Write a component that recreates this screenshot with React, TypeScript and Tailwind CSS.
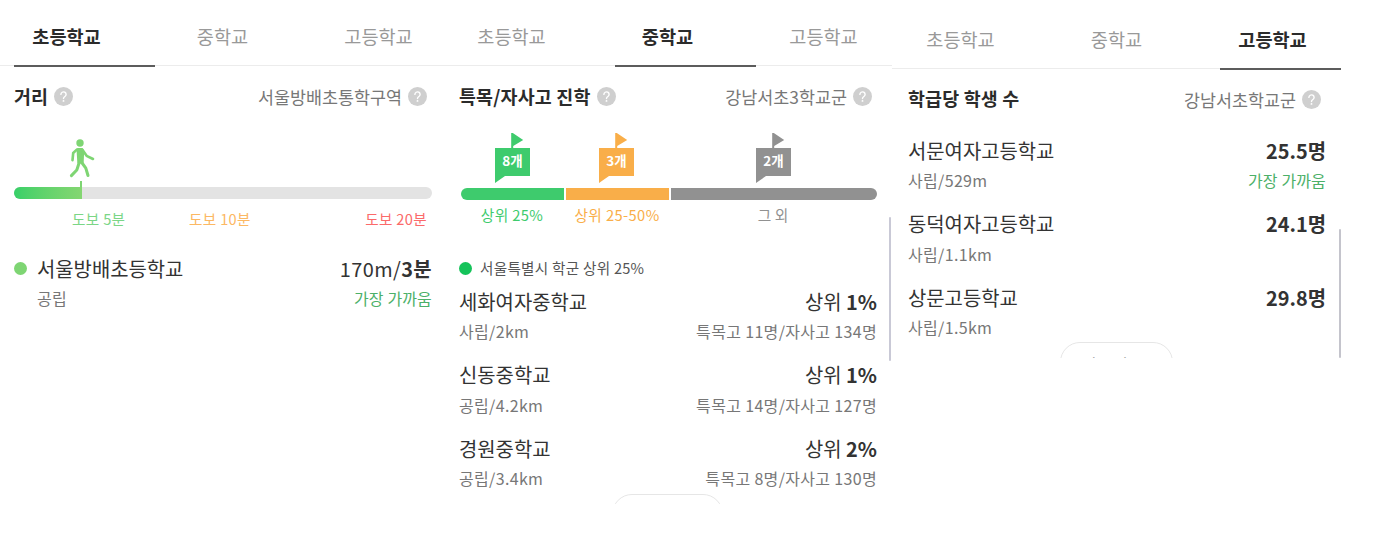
import type { ReactNode } from "react";
import clsx from "clsx";

type School = {
  name: string;
  info: string;
  value: ReactNode;
  note?: string;
  near?: boolean;
};

const TABS = ["초등학교", "중학교", "고등학교"];

const MIDDLE_SCHOOLS: School[] = [
  { name: "세화여자중학교", info: "사립/2km", value: <>상위 <b>1%</b></>, note: "특목고 11명/자사고 134명" },
  { name: "신동중학교", info: "공립/4.2km", value: <>상위 <b>1%</b></>, note: "특목고 14명/자사고 127명" },
  { name: "경원중학교", info: "공립/3.4km", value: <>상위 <b>2%</b></>, note: "특목고 8명/자사고 130명" },
];

const HIGH_SCHOOLS: School[] = [
  { name: "서문여자고등학교", info: "사립/529m", value: <b>25.5명</b>, note: "가장 가까움", near: true },
  { name: "동덕여자고등학교", info: "사립/1.1km", value: <b>24.1명</b> },
  { name: "상문고등학교", info: "사립/1.5km", value: <b>29.8명</b> },
];

function Tabs({ active, className }: { active: number; className?: string }) {
  return (
    <div className={clsx("flex border-b border-[#ececec]", className)}>
      {TABS.map((tab, i) => (
        <div key={tab} className="relative flex w-[156px] shrink-0 items-center justify-center pr-[51px]">
          <span
            className={clsx(
              "whitespace-nowrap text-[18.6px]",
              i === active ? "font-bold text-[#2b2b2b]" : "text-[#999]"
            )}
          >
            {tab}
          </span>
          {i === active && (
            <span className="absolute -bottom-[2px] left-0 h-[2px] w-[141px] bg-[#5c5c5c]" />
          )}
        </div>
      ))}
    </div>
  );
}

function Help() {
  return (
    <svg viewBox="0 0 19 19" className="h-[19px] w-[19px] shrink-0">
      <circle cx="9.5" cy="9.5" r="9.5" fill="#cfcfcf" />
      <path
        d="M6.9 7.4a2.6 2.5 0 1 1 4 2.1c-.9.6-1.4 1-1.4 2"
        fill="none"
        stroke="#fff"
        strokeWidth="1.4"
        strokeLinecap="round"
      />
      <circle cx="9.5" cy="13.9" r="0.95" fill="#fff" />
    </svg>
  );
}

function Title({ children, help, district, className }: { children: ReactNode; help?: boolean; district: string; className?: string }) {
  return (
    <div className="flex h-[60px] items-center justify-between whitespace-nowrap pt-[2px]">
      <div className="flex items-center gap-[6px]">
        <h2 className={clsx("text-[18.4px] font-bold tracking-[0.2px] text-[#2b2b2b]", className)}>{children}</h2>
        {help && <Help />}
      </div>
      <div className="flex items-center gap-[6px] pr-[5px]">
        <span className="text-[17.4px] text-[#777]">{district}</span>
        <Help />
      </div>
    </div>
  );
}

function SchoolRow({ school }: { school: School }) {
  return (
    <div className="h-[73.7px] whitespace-nowrap">
      <div className="flex h-[31px] items-center justify-between text-[19.9px] text-[#333]">
        <span>{school.name}</span>
        <span>{school.value}</span>
      </div>
      <div className="flex h-[28px] items-center justify-between text-[16px] tracking-[0.33px] text-[#777]">
        <span>{school.info}</span>
        <span className={clsx(school.near && "tracking-[0.15px] text-[#4cb068]")}>{school.note}</span>
      </div>
    </div>
  );
}

function Walker() {
  return (
    <svg viewBox="0 0 26 39" className="h-[39px] w-[26px]" fill="none" stroke="#7ed573" strokeLinecap="round" strokeLinejoin="round">
      <circle cx="11" cy="4" r="3.7" fill="#7ed573" stroke="none" />
      <path d="M8.8 10.2h4.2l.8 3.5-.4 9.6H9.6z" fill="#7ed573" strokeWidth="2.6" />
      <path d="M7.8 10.6L4.2 14l-.7 7.2" strokeWidth="2.6" />
      <path d="M13.4 10.8l4.2 6 6.4 3.2" strokeWidth="2.6" />
      <path d="M10.4 23l-2.6 8-5.4 5.6" strokeWidth="3" />
      <path d="M12 22.5l4.8 6.6 2.2 7.4" strokeWidth="3" />
    </svg>
  );
}

function Flag({ label, className }: { label: string; className?: string }) {
  return (
    <div className={clsx("relative h-[50px] w-[35px]", className)}>
      <svg viewBox="0 0 35 50" className="h-[50px] w-[35px]" fill="currentColor">
        <path d="M16.2 0h1.6L28.2 7 18.2 13v3h-2z" />
        <path d="M0 15h35v28H10L0 50z" />
      </svg>
      <span className="absolute inset-x-0 top-[14px] text-center text-[13.5px] font-bold leading-[26px] text-white">
        {label}
      </span>
    </div>
  );
}

function MoreButton({ className }: { className?: string }) {
  return (
    <div className={clsx("overflow-hidden", className)}>
      <div className="flex h-[40px] justify-center rounded-full border border-[#e6e6e6] pr-6 pt-[12px] text-[17px] leading-[20px] text-[#555]">
        더보기
      </div>
    </div>
  );
}

export default function App() {
  return (
    <div className="flex h-[538px] w-full overflow-hidden bg-white font-['Noto_Sans_CJK_KR',sans-serif]">
      {/* 초등학교 */}
      <section className="w-[446px] overflow-hidden">
        <Tabs active={0} className="h-[66px] pl-[14px] pt-[6px]" />
        <div className="ml-[14px] w-[418px]">
          <Title help district="서울방배초통학구역">거리</Title>
          <div className="ml-[55px] mt-[13px]">
            <Walker />
          </div>
          <div className="ml-[66px] mt-[3px] h-[6px] w-[2px] bg-[#7ed573]" />
          <div className="h-[12px] overflow-hidden rounded-full bg-[#e3e3e3]">
            <div className="h-full w-[68px] bg-linear-to-r from-[#36d068] to-[#84d671]" />
          </div>
          <div className="flex h-[39px] items-center whitespace-nowrap text-[14.6px] tracking-[0.35px]">
            <span className="ml-[58px] w-[117px] text-[#7bd686]">도보 5분</span>
            <span className="text-[#fcb863]">도보 10분</span>
            <span className="ml-auto pr-[5px] text-[#fb6a6a]">도보 20분</span>
          </div>

          <div className="mt-[15px] flex">
            <span className="mr-[10px] mt-[9px] h-[13px] w-[13px] rounded-full bg-[#7ed573]" />
            <div className="flex-1">
              <SchoolRow
                school={{
                  name: "서울방배초등학교",
                  info: "공립",
                  value: <span className="tracking-[0.4px]">170m/<b>3분</b></span>,
                  note: "가장 가까움",
                  near: true,
                }}
              />
            </div>
          </div>
        </div>
      </section>

      {/* 중학교 */}
      <section className="relative w-[446px] overflow-hidden">
        <Tabs active={1} className="h-[66px] pl-[13px] pt-[6px]" />
        <div className="ml-[13px] w-[418px]">
          <Title help district="강남서초3학교군">특목/자사고 진학</Title>
          <div className="mt-[7px] flex">
            <Flag label="8개" className="ml-[36px] text-[#3ecb6d]" />
            <Flag label="3개" className="ml-[69px] text-[#f9ae49]" />
            <Flag label="2개" className="ml-[122px] text-[#919191]" />
          </div>
          <div className="ml-[2px] mt-[5px] flex h-[12px] gap-[2px] overflow-hidden rounded-full">
            <div className="w-[103px] bg-[#3ecb6d]" />
            <div className="w-[103px] bg-[#f9ae49]" />
            <div className="flex-1 bg-[#919191]" />
          </div>
          <div className="flex h-[30px] items-center whitespace-nowrap text-[14.7px] tracking-[0.4px]">
            <span className="w-[106px] text-center text-[#3ecb6d]">상위 25%</span>
            <span className="w-[104px] text-center text-[#f9ae49]">상위 25-50%</span>
            <span className="flex-1 text-center tracking-normal text-[#919191]">그 외</span>
          </div>
          <div className="mt-[26px] flex h-[24px] items-center gap-[8px] text-[14.6px] tracking-[0.27px] text-[#555]">
            <span className="h-[13px] w-[13px] rounded-full bg-[#15c35a]" />
            서울특별시 학군 상위 25%
          </div>
          <div className="mt-[6px] h-[208px]">
            {MIDDLE_SCHOOLS.map((school) => (
              <SchoolRow key={school.name} school={school} />
            ))}
          </div>
          <MoreButton className="ml-[153px] h-[10px] w-[111px]" />
        </div>
        <div className="absolute right-[1px] top-[217px] h-[144px] w-[2px] rounded-full bg-[#c9c9d6]" />
      </section>

      {/* 고등학교 */}
      <section className="relative w-[449px] overflow-hidden">
        <Tabs active={2} className="h-[69px] pl-[16px] pt-[9px]" />
        <div className="ml-[16px] w-[418px]">
          <Title district="강남서초학교군" className="-mt-[3px]">학급당 학생 수</Title>
          <div className="mt-[6px] h-[207px]">
            {HIGH_SCHOOLS.map((school) => (
              <SchoolRow key={school.name} school={school} />
            ))}
          </div>
          <MoreButton className="ml-[152px] h-[16px] w-[113px]" />
        </div>
        <div className="absolute right-0 top-[229px] h-[129px] w-[2px] rounded-full bg-[#c4c4cc]" />
      </section>
    </div>
  );
}
